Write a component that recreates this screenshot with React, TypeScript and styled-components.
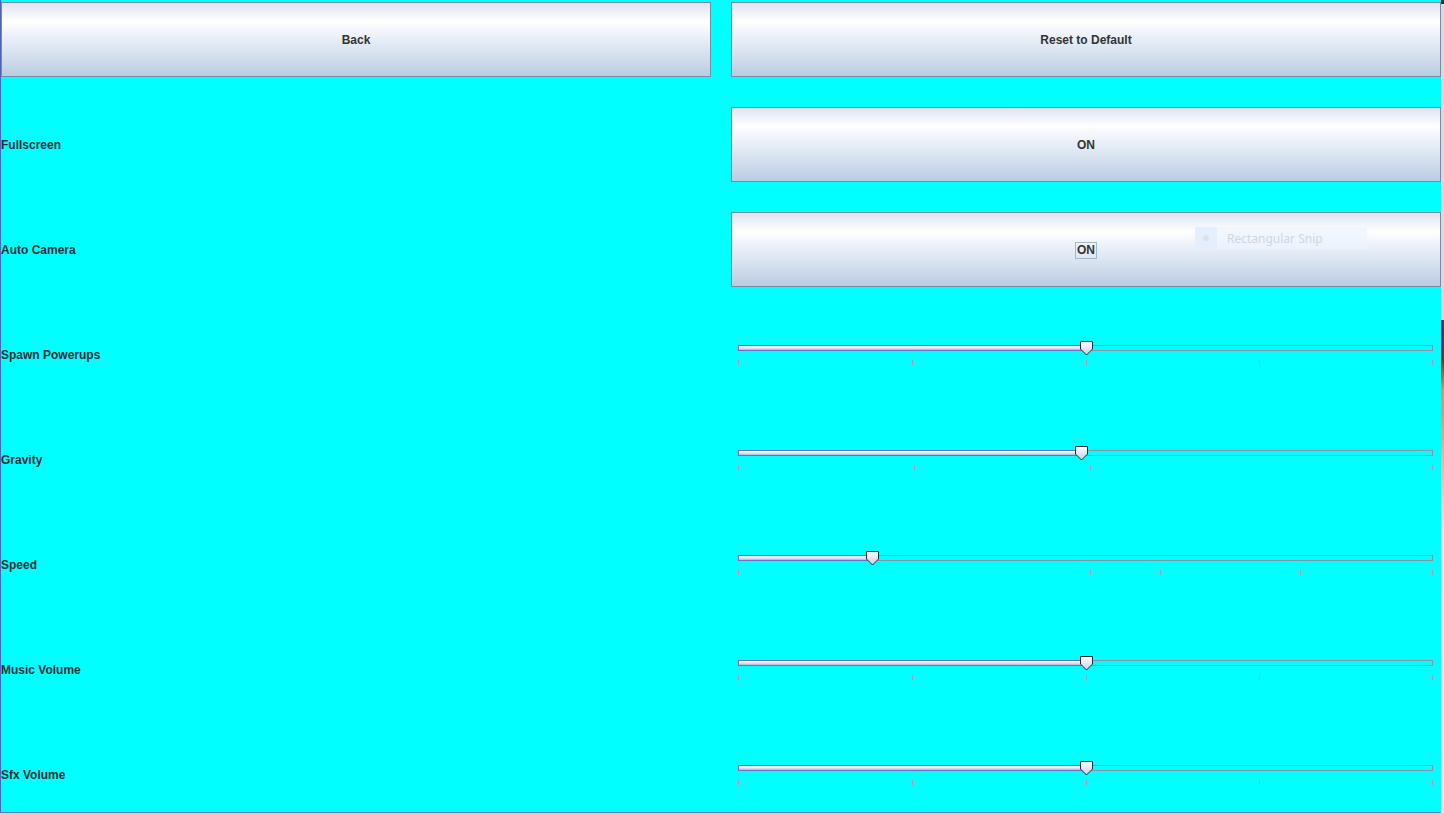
import React from 'react'
import styled, { createGlobalStyle, css } from 'styled-components'

const GlobalStyle = createGlobalStyle`
    html, body {
        margin: 0;
        padding: 0;
        background: #cfd2d6;
        overflow: hidden;
    }
    body {
        font-family: 'Liberation Sans', Arial, sans-serif;
    }
`

const Screen = styled.div`
    display: flex;
    width: 1444px;
    height: 815px;
    align-items: flex-start;
`

const Window = styled.div`
    position: relative;
    display: grid;
    grid-template-columns: 710px 710px;
    grid-auto-rows: 75px;
    column-gap: 20px;
    row-gap: 30px;
    box-sizing: border-box;
    width: 1441px;
    height: 813px;
    padding-top: 2px;
    background: #00ffff;
    border-left: 1px solid #4b63b8;
    border-bottom: 1px solid #6b7cb0;
`

const DesktopEdge = styled.div`
    width: 3px;
    height: 813px;
    background: linear-gradient(
        #2a2540 0px,
        #2a2540 4px,
        #d8dae0 4px,
        #d8dae0 320px,
        #4a2f6e 320px,
        #5a3070 345px,
        #6b3a1e 360px,
        #c89a6a 390px,
        #caa57e 420px,
        #e8e8ea 530px,
        #e8e8ea 813px
    );
`

const buttonFace = css`
    box-sizing: border-box;
    border: 1px solid #7a8aa2;
    background: linear-gradient(
        #dde4f1 0%,
        #ffffff 25%,
        #e7eef8 50%,
        #d2ddec 75%,
        #b9cce3 100%
    );
`

const Button = styled.div`
    ${buttonFace}
    display: flex;
    align-items: center;
    justify-content: center;
    width: 710px;
    height: 75px;
    padding-top: 1px;
    font-size: 12px;
    font-weight: bold;
    color: #333333;
`

const Focused = styled.span<{ $focus?: boolean }>`
    padding: 0 1px;
    line-height: 15px;
    border: 1px solid ${({ $focus }) => ($focus ? '#a3b8cc' : 'transparent')};
`

const Label = styled.div`
    display: flex;
    align-items: center;
    height: 75px;
    font-size: 12px;
    font-weight: bold;
    color: #2e2e36;
`

const SliderCell = styled.div`
    position: relative;
    height: 75px;
`

const Track = styled.div`
    position: absolute;
    left: 7px;
    right: 8px;
    top: 28px;
    height: 6px;
    display: flex;
`

const TrackFilled = styled.div`
    box-sizing: border-box;
    height: 6px;
    border: 1px solid #6b70c9;
    border-right: none;
    background: linear-gradient(#ffffff 0%, #e6ecf8 45%, #a9b8dc 100%);
`

const TrackEmpty = styled.div`
    box-sizing: border-box;
    flex: 1;
    height: 6px;
    border: 1px solid #8f90a6;
    border-left: none;
`

const Tick = styled.div`
    position: absolute;
    top: 15px;
    width: 1px;
    height: 5px;
    margin-left: -1px;
    background: #b893ad;
`

const Thumb = styled.svg`
    position: absolute;
    top: -5px;
    margin-left: -8px;
    width: 15px;
    height: 16px;
`

const Snip = styled.div`
    position: absolute;
    left: 1194px;
    top: 227px;
    width: 172px;
    height: 22px;
    display: flex;
    align-items: center;
    background: rgba(236, 244, 253, 0.75);
    font-family: 'Noto Sans', 'Open Sans', sans-serif;
    font-size: 12px;
    color: #cfd6de;
`

const SnipIcon = styled.div`
    width: 22px;
    height: 22px;
    display: flex;
    align-items: center;
    justify-content: center;
    margin-right: 10px;
    background: rgba(225, 238, 252, 0.8);

    &::after {
        content: '';
        width: 6px;
        height: 6px;
        border-radius: 50%;
        background: #dde2e8;
    }
`

const TRACK_WIDTH = 695

interface SliderProps {
    value: number
    ticks: number[]
}

const Slider = ({ value, ticks }: SliderProps) => (
    <SliderCell>
        <Track>
            <TrackFilled style={{ width: value * TRACK_WIDTH }} />
            <TrackEmpty />
            {ticks.map((t) => (
                <Tick key={t} style={{ left: Math.min(Math.round(t * TRACK_WIDTH) + 1, TRACK_WIDTH) }} />
            ))}
            <Thumb
                viewBox="0 0 15 16"
                style={{ left: Math.round(value * TRACK_WIDTH) + 1 }}
            >
                <defs>
                    <linearGradient id="thumbFace" x1="0" y1="0" x2="0" y2="1">
                        <stop offset="0" stopColor="#ffffff" />
                        <stop offset="1" stopColor="#c4d0e6" />
                    </linearGradient>
                </defs>
                <path
                    d="M1.5 1.5 H13.5 V9 L7.5 15 L1.5 9 Z"
                    fill="url(#thumbFace)"
                    stroke="#2b2b33"
                    strokeWidth="1"
                    strokeLinejoin="round"
                />
            </Thumb>
        </Track>
    </SliderCell>
)

const sliders = [
    { label: 'Spawn Powerups', value: 0.5, ticks: [0, 0.25, 0.5, 0.75, 1] },
    { label: 'Gravity', value: 0.494, ticks: [0, 0.253, 0.506, 1] },
    { label: 'Speed', value: 0.193, ticks: [0, 0.506, 0.607, 0.809, 1] },
    { label: 'Music Volume', value: 0.5, ticks: [0, 0.25, 0.5, 0.75, 1] },
    { label: 'Sfx Volume', value: 0.5, ticks: [0, 0.25, 0.5, 0.75, 1] },
]

export default function App() {
    return (
        <>
            <GlobalStyle />
            <Screen>
                <Window>
                    <Button>Back</Button>
                    <Button>Reset to Default</Button>

                    <Label>Fullscreen</Label>
                    <Button>
                        <Focused>ON</Focused>
                    </Button>

                    <Label>Auto Camera</Label>
                    <Button>
                        <Focused $focus>ON</Focused>
                    </Button>

                    {sliders.map((s) => (
                        <React.Fragment key={s.label}>
                            <Label>{s.label}</Label>
                            <Slider value={s.value} ticks={s.ticks} />
                        </React.Fragment>
                    ))}

                    <Snip>
                        <SnipIcon />
                        Rectangular Snip
                    </Snip>
                </Window>
                <DesktopEdge />
            </Screen>
        </>
    )
}
